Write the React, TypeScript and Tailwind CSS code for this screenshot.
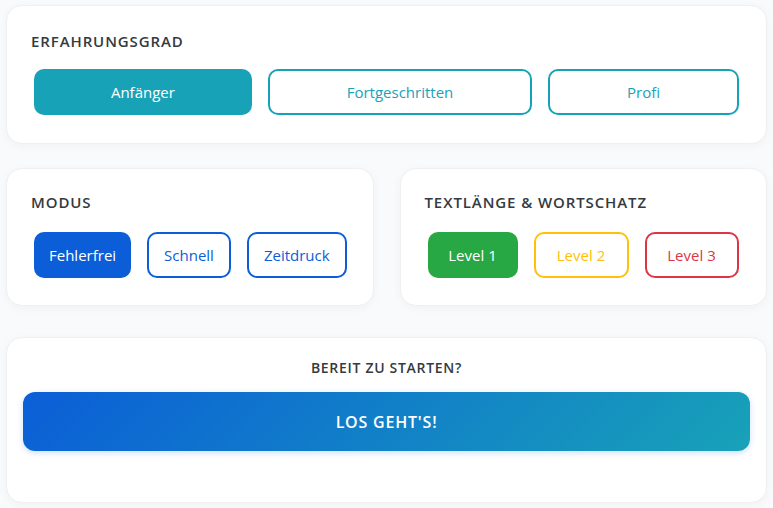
export default function App() {
  const font = { fontFamily: '"Segoe UI", "Open Sans", "Noto Sans", sans-serif' };
  return (
    <div
      className="min-h-screen w-[773px] bg-[#f9fafb] px-[6px] pt-[5px] pb-[6px] flex flex-col"
      style={font}
    >
      {/* Erfahrungsgrad */}
      <div className="bg-white rounded-2xl border border-[#eef0f2] shadow-[0_2px_10px_rgba(0,0,0,0.04)] px-6 pt-[25px] pb-[28px]">
        <h2 className="text-[15px] font-semibold tracking-[0.06em] text-[#343a40] leading-5 uppercase">
          Erfahrungsgrad
        </h2>
        <div className="flex gap-4 px-[3px] mt-[18px]">
          <button className="flex-auto h-[46px] rounded-[10px] bg-[#18a2b8] text-white text-[15px]">
            Anfänger
          </button>
          <button className="flex-auto h-[46px] rounded-[10px] border-2 border-[#18a2b8] text-[#18a2b8] text-[15px] bg-white">
            Fortgeschritten
          </button>
          <button className="flex-auto h-[46px] rounded-[10px] border-2 border-[#18a2b8] text-[#18a2b8] text-[15px] bg-white">
            Profi
          </button>
        </div>
      </div>

      <div className="grid grid-cols-2 gap-[26px] mt-[24px]">
        {/* Modus */}
        <div className="bg-white rounded-2xl border border-[#eef0f2] shadow-[0_2px_10px_rgba(0,0,0,0.04)] px-6 pt-[23px] pb-[27px]">
          <h2 className="text-[15px] font-semibold tracking-[0.06em] text-[#343a40] leading-5 uppercase">
            Modus
          </h2>
          <div className="flex gap-4 px-[3px] mt-[20px]">
            <button className="h-[46px] px-[15px] rounded-[10px] bg-[#0b5ed7] text-white text-[15px]">
              Fehlerfrei
            </button>
            <button className="h-[46px] px-[15px] rounded-[10px] border-2 border-[#0b5ed7] text-[#0b5ed7] text-[15px] bg-white">
              Schnell
            </button>
            <button className="h-[46px] px-[15px] rounded-[10px] border-2 border-[#0b5ed7] text-[#0b5ed7] text-[15px] bg-white">
              Zeitdruck
            </button>
          </div>
        </div>

        {/* Textlänge */}
        <div className="bg-white rounded-2xl border border-[#eef0f2] shadow-[0_2px_10px_rgba(0,0,0,0.04)] px-6 pt-[23px] pb-[27px]">
          <h2 className="text-[15px] font-semibold tracking-[0.06em] text-[#343a40] leading-5 uppercase">
            Textlänge &amp; Wortschatz
          </h2>
          <div className="flex gap-4 px-[3px] mt-[20px]">
            <button className="h-[46px] w-[90px] rounded-[10px] bg-[#28a745] text-white text-[15px]">
              Level 1
            </button>
            <button className="h-[46px] w-[95px] rounded-[10px] border-2 border-[#ffc107] text-[#ffc107] text-[15px] bg-white">
              Level 2
            </button>
            <button className="h-[46px] w-[94px] rounded-[10px] border-2 border-[#dc3545] text-[#dc3545] text-[15px] bg-white">
              Level 3
            </button>
          </div>
        </div>
      </div>

      {/* Start */}
      <div className="bg-white rounded-2xl border border-[#eef0f2] shadow-[0_2px_10px_rgba(0,0,0,0.04)] px-4 pt-[20px] pb-[51px] mt-[31px]">
        <p className="text-center text-[14px] font-semibold tracking-[0.05em] text-[#343a40] leading-5 uppercase">
          Bereit zu starten?
        </p>
        <button className="mt-[14px] w-full h-[59px] rounded-xl bg-[linear-gradient(135deg,#0b5ed7,#18a2b8)] text-white text-[16px] font-semibold tracking-[0.05em] uppercase shadow-[0_2px_6px_rgba(11,94,215,0.2)]">
          Los geht's!
        </button>
      </div>
    </div>
  );
}
